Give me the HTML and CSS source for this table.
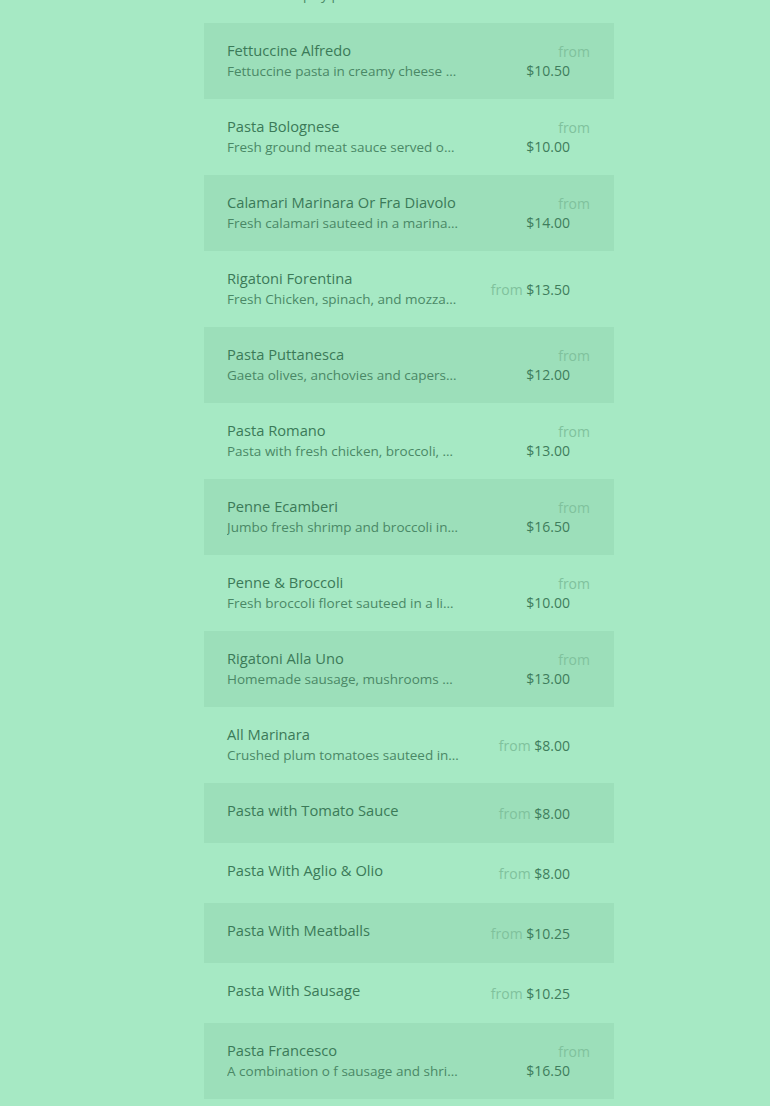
FILE: index.html
```html
<!DOCTYPE html>
<html lang="en">
<head>
  <meta charset="UTF-8">
  <meta name="viewport" content="width=device-width, initial-scale=1.0">
  <title>Pasta Menu</title>
  <link rel="stylesheet" href="styles.css">
</head>
<body>
  <div class="menu">
    <div class="item">
      <div class="info">
        <div class="name">Penne Alla Vodka</div>
        <div class="desc">Penne in a spicy pink vodka sauce with peas</div>
      </div>
      <div class="price"><span class="from">from</span> <span class="amt">$11.00</span></div>
    </div>
    <div class="item">
      <div class="info">
        <div class="name">Fettuccine Alfredo</div>
        <div class="desc">Fettuccine pasta in creamy cheese sauce</div>
      </div>
      <div class="price stack"><span class="from">from</span> <span class="amt">$10.50</span></div>
    </div>
    <div class="item">
      <div class="info">
        <div class="name">Pasta Bolognese</div>
        <div class="desc">Fresh ground meat sauce served over pasta</div>
      </div>
      <div class="price stack"><span class="from">from</span> <span class="amt">$10.00</span></div>
    </div>
    <div class="item">
      <div class="info">
        <div class="name">Calamari Marinara Or Fra Diavolo</div>
        <div class="desc">Fresh calamari sauteed in a marinara sauce</div>
      </div>
      <div class="price stack"><span class="from">from</span> <span class="amt">$14.00</span></div>
    </div>
    <div class="item">
      <div class="info">
        <div class="name">Rigatoni Forentina</div>
        <div class="desc">Fresh Chicken, spinach, and mozzarella cheese</div>
      </div>
      <div class="price"><span class="from">from</span> <span class="amt">$13.50</span></div>
    </div>
    <div class="item">
      <div class="info">
        <div class="name">Pasta Puttanesca</div>
        <div class="desc">Gaeta olives, anchovies and capers in marinara</div>
      </div>
      <div class="price stack"><span class="from">from</span> <span class="amt">$12.00</span></div>
    </div>
    <div class="item">
      <div class="info">
        <div class="name">Pasta Romano</div>
        <div class="desc">Pasta with fresh chicken, broccoli, and garlic</div>
      </div>
      <div class="price stack"><span class="from">from</span> <span class="amt">$13.00</span></div>
    </div>
    <div class="item">
      <div class="info">
        <div class="name">Penne Ecamberi</div>
        <div class="desc">Jumbo fresh shrimp and broccoli in garlic sauce</div>
      </div>
      <div class="price stack"><span class="from">from</span> <span class="amt">$16.50</span></div>
    </div>
    <div class="item">
      <div class="info">
        <div class="name">Penne &amp; Broccoli</div>
        <div class="desc">Fresh broccoli floret sauteed in a light garlic sauce</div>
      </div>
      <div class="price stack"><span class="from">from</span> <span class="amt">$10.00</span></div>
    </div>
    <div class="item">
      <div class="info">
        <div class="name">Rigatoni Alla Uno</div>
        <div class="desc">Homemade sausage, mushrooms and peppers</div>
      </div>
      <div class="price stack"><span class="from">from</span> <span class="amt">$13.00</span></div>
    </div>
    <div class="item">
      <div class="info">
        <div class="name">All Marinara</div>
        <div class="desc">Crushed plum tomatoes sauteed in olive oil</div>
      </div>
      <div class="price"><span class="from">from</span> <span class="amt">$8.00</span></div>
    </div>
    <div class="item">
      <div class="info">
        <div class="name">Pasta with Tomato Sauce</div>
      </div>
      <div class="price"><span class="from">from</span> <span class="amt">$8.00</span></div>
    </div>
    <div class="item">
      <div class="info">
        <div class="name">Pasta With Aglio &amp; Olio</div>
      </div>
      <div class="price"><span class="from">from</span> <span class="amt">$8.00</span></div>
    </div>
    <div class="item">
      <div class="info">
        <div class="name">Pasta With Meatballs</div>
      </div>
      <div class="price"><span class="from">from</span> <span class="amt">$10.25</span></div>
    </div>
    <div class="item">
      <div class="info">
        <div class="name">Pasta With Sausage</div>
      </div>
      <div class="price"><span class="from">from</span> <span class="amt">$10.25</span></div>
    </div>
    <div class="item">
      <div class="info">
        <div class="name">Pasta Francesco</div>
        <div class="desc">A combination o f sausage and shrimp in marinara</div>
      </div>
      <div class="price stack"><span class="from">from</span> <span class="amt">$16.50</span></div>
    </div>
    <div class="item">
      <div class="info">
        <div class="name">Linguine With Clams</div>
        <div class="desc">Fresh clams in white or red sauce</div>
      </div>
      <div class="price stack"><span class="from">from</span> <span class="amt">$14.00</span></div>
    </div>
  </div>
</body>
</html>
```

FILE: styles.css
```css
body {
  margin: 0;
  background-color: #a6e9c4;
  font-family: "Open Sans", "Liberation Sans", sans-serif;
  overflow: hidden;
}
.menu {
  width: 410px;
  margin: -53px 0 0 204px;
}
.item {
  display: flex;
  align-items: center;
  padding: 18px 24px 18px 23px;
}
.item:nth-child(even) {
  background-color: #9cdfba;
}
.info {
  flex: 1;
  min-width: 0;
  min-height: 24px;
}
.name {
  font-size: 14.7px;
  font-weight: 500;
  line-height: 18px;
  color: #3b7a58;
}
.desc {
  width: 232px;
  margin-top: 2px;
  font-size: 13.5px;
  line-height: 20px;
  color: #4a8866;
  white-space: nowrap;
  overflow: hidden;
  text-overflow: ellipsis;
}
.price {
  text-align: right;
  font-size: 14px;
  line-height: 19px;
  white-space: nowrap;
}
.from {
  color: #80c29d;
}
.amt {
  display: inline-block;
  margin-right: 20px;
  color: #3f7d5c;
}
.price.stack .from {
  display: block;
}
```
